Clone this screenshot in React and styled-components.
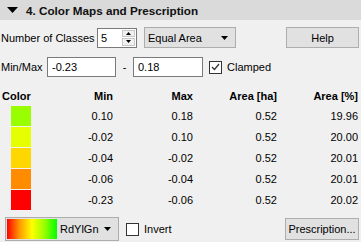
import React from 'react'
import styled, { createGlobalStyle } from 'styled-components'

const Global = createGlobalStyle`
  html, body { margin: 0; padding: 0; background: #f0f0f0; }
  body {
    font-family: "Liberation Sans", Arial, sans-serif;
    font-size: 11px;
    color: #000;
  }
`

const Panel = styled.div`
  width: 361px;
  height: 242px;
  background: #f0f0f0;
  overflow: hidden;
`

const Header = styled.div`
  height: 20px;
  background: #dadada;
  display: flex;
  align-items: center;
  padding-left: 7px;
  font-weight: bold;
  font-size: 11.7px;
  color: #111;

  svg { margin-right: 8px; }
`

const Row = styled.div`
  display: flex;
  align-items: center;
  height: ${({ h }) => h || 21}px;
  margin-top: ${({ mt }) => mt || 0}px;
  padding: 0 2px 0 1px;
`

const Label = styled.span`
  width: ${({ w }) => w}px;
  flex: none;
  white-space: nowrap;
`

const SpinBox = styled.div`
  width: 40px;
  height: 20px;
  box-sizing: border-box;
  border: 1px solid #7a7a7a;
  background: #fff;
  display: flex;
  align-items: center;
  padding-left: 3px;

  span { flex: 1; }
`

const SpinArrows = styled.div`
  width: 13px;
  height: 16px;
  margin-right: 1px;
  display: flex;
  flex-direction: column;
  gap: 1px;

  div {
    flex: 1;
    background: #f0f0f0;
    border: 1px solid #c8c8c8;
    display: flex;
    align-items: center;
    justify-content: center;
  }
`

const Combo = styled.div`
  width: ${({ w }) => w}px;
  height: ${({ h }) => h || 21}px;
  margin-left: ${({ ml }) => ml || 0}px;
  box-sizing: border-box;
  border: 1px solid #adadad;
  background: #e1e1e1;
  display: flex;
  align-items: center;
  padding: 0 7px 0 3px;

  span { flex: 1; }
`

const Button = styled.div`
  width: ${({ w }) => w}px;
  height: ${({ h }) => h || 21}px;
  margin-left: auto;
  box-sizing: border-box;
  border: 1px solid #adadad;
  background: #e1e1e1;
  display: flex;
  align-items: center;
  justify-content: center;
`

const Input = styled.div`
  width: ${({ w }) => w}px;
  height: 20px;
  box-sizing: border-box;
  border: 1px solid #7a7a7a;
  background: #fff;
  display: flex;
  align-items: center;
  padding-left: 4px;
`

const Dash = styled.span`
  width: 17px;
  text-align: center;
`

const Check = styled.div`
  width: 13px;
  height: 13px;
  box-sizing: border-box;
  border: 1px solid #333;
  background: #fff;
  margin-left: ${({ ml }) => ml}px;
  margin-right: 5px;
  display: flex;
  align-items: center;
  justify-content: center;
`

const Table = styled.div`
  display: grid;
  grid-template-columns: 40px 73px 80px 84px 81px;
  grid-template-rows: 19px;
  grid-auto-rows: 21px;
  margin-top: 9px;
  padding-right: 3px;
`

const HeadCell = styled.div`
  font-weight: bold;
  display: flex;
  align-items: center;
  justify-content: ${({ left }) => (left ? 'flex-start' : 'flex-end')};
  padding-left: ${({ left }) => (left ? 2 : 0)}px;
`

const Cell = styled.div`
  display: flex;
  align-items: center;
  justify-content: ${({ left }) => (left ? 'flex-start' : 'flex-end')};
`

const Swatch = styled.div`
  width: 20px;
  height: 20px;
  margin-left: 11px;
  background: ${({ c }) => c};
`

const Gradient = styled.div`
  width: 50px;
  height: 20px;
  margin-left: -2px;
  margin-right: 3px;
  flex: none;
  background: linear-gradient(to right, #ff0000, #ff9900 25%, #ffff00 50%, #99ff00 75%, #00ff00);
`

const Arrow = () => (
  <svg width="7" height="4" viewBox="0 0 7 4"><path d="M0 0h7L3.5 4z" fill="#000" /></svg>
)

const rows = [
  ['#99ff00', '0.10', '0.18', '0.52', '19.96'],
  ['#e6ff00', '-0.02', '0.10', '0.52', '20.00'],
  ['#ffd700', '-0.04', '-0.02', '0.52', '20.01'],
  ['#ff8c00', '-0.06', '-0.04', '0.52', '20.01'],
  ['#ff0000', '-0.23', '-0.06', '0.52', '20.02'],
]

const App = () => (
  <Panel>
    <Global />
    <Header>
      <svg width="11" height="6" viewBox="0 0 11 6"><path d="M0 0h11L5.5 6z" fill="#000" /></svg>
      4. Color Maps and Prescription
    </Header>

    <Row mt={7} h={21}>
      <Label w={96}>Number of Classes</Label>
      <SpinBox>
        <span>5</span>
        <SpinArrows>
          <div><svg width="5" height="3" viewBox="0 0 5 3"><path d="M0 3h5L2.5 0z" fill="#000" /></svg></div>
          <div><svg width="5" height="3" viewBox="0 0 5 3"><path d="M0 0h5L2.5 3z" fill="#000" /></svg></div>
        </SpinArrows>
      </SpinBox>
      <Combo w={92} ml={7}>
        <span>Equal Area</span>
        <Arrow />
      </Combo>
      <Button w={73}>Help</Button>
    </Row>

    <Row mt={9} h={20}>
      <Label w={46}>Min/Max</Label>
      <Input w={69}>-0.23</Input>
      <Dash>-</Dash>
      <Input w={70}>0.18</Input>
      <Check ml={6}>
        <svg width="9" height="8" viewBox="0 0 9 8"><path d="M1 4l2.5 2.5L8 1" stroke="#333" strokeWidth="1.2" fill="none" /></svg>
      </Check>
      Clamped
    </Row>

    <Table>
      <HeadCell left>Color</HeadCell>
      <HeadCell>Min</HeadCell>
      <HeadCell>Max</HeadCell>
      <HeadCell>Area [ha]</HeadCell>
      <HeadCell>Area [%]</HeadCell>
      {rows.map((r) => (
        <React.Fragment key={r[0]}>
          <Cell left><Swatch c={r[0]} /></Cell>
          <Cell>{r[1]}</Cell>
          <Cell>{r[2]}</Cell>
          <Cell>{r[3]}</Cell>
          <Cell>{r[4]}</Cell>
        </React.Fragment>
      ))}
    </Table>

    <Row mt={7} h={24}>
      <Combo w={114} h={24} ml={4}>
        <Gradient />
        <span>RdYlGn</span>
        <Arrow />
      </Combo>
      <Check ml={7}></Check>
      Invert
      <Button w={74} h={22}>Prescription...</Button>
    </Row>
  </Panel>
)

export default App
